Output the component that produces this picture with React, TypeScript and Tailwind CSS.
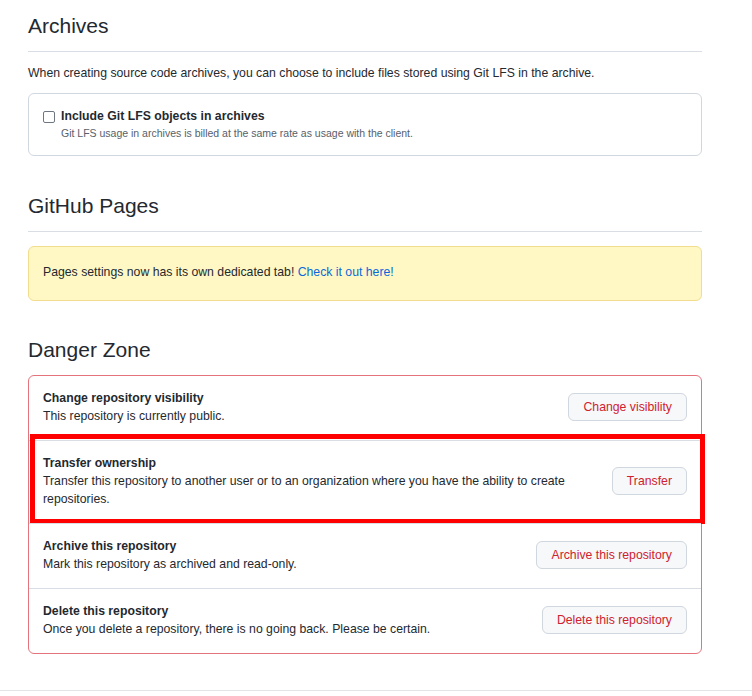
const font = { fontFamily: '"Liberation Sans", Arial, sans-serif' };

type DangerRow = {
  title: string;
  desc: string;
  action: string;
  marked?: boolean;
};

const rows: DangerRow[] = [
  { title: "Change repository visibility", desc: "This repository is currently public.", action: "Change visibility" },
  {
    title: "Transfer ownership",
    desc: "Transfer this repository to another user or to an organization where you have the ability to create repositories.",
    action: "Transfer",
    marked: true,
  },
  { title: "Archive this repository", desc: "Mark this repository as archived and read-only.", action: "Archive this repository" },
  { title: "Delete this repository", desc: "Once you delete a repository, there is no going back. Please be certain.", action: "Delete this repository" },
];

const Heading = ({ children, divider = true }: { children: string; divider?: boolean }) => (
  <div className={divider ? "border-b border-[#d8dee4] pb-[10px] pt-[10px]" : "pt-[10px] pb-[10px]"}>
    <h2 className="text-[21px] leading-[30px] font-normal text-[#24292f]">{children}</h2>
  </div>
);

const App = () => {
  return (
    <div style={font} className="min-h-[696px] w-[752px] bg-white text-[#24292f] flex flex-col">
      <div className="ml-[28px] mt-px w-[674px]">
        <Heading>Archives</Heading>
        <p className="mt-[12px] text-[12.25px] leading-[18px]">
          When creating source code archives, you can choose to include files stored using Git LFS in the archive.
        </p>
        <div className="mt-[11px] rounded-[6px] border border-[#d0d7de] px-[14px] py-[14px]">
          <label className="flex items-center gap-[6px]">
            <span className="inline-block h-[12px] w-[12px] rounded-[2px] border border-[#6e7781] bg-white" />
            <span className="text-[12.25px] leading-[17px] font-bold">Include Git LFS objects in archives</span>
          </label>
          <p className="ml-[18px] text-[10.5px] leading-[16px] text-[#57606a]">
            Git LFS usage in archives is billed at the same rate as usage with the client.
          </p>
        </div>

        <div className="mt-[25px]">
          <Heading>GitHub Pages</Heading>
        </div>
        <div className="mt-[14px] rounded-[6px] border border-[#f2dc8e] bg-[#fff8c5] px-[14px] pt-[15px] pb-[18px] text-[12.25px] leading-[20px]">
          Pages settings now has its own dedicated tab! <a className="text-[#0969da]">Check it out here!</a>
        </div>

        <div className="mt-[24px]">
          <Heading divider={false}>Danger Zone</Heading>
        </div>
        <div className="rounded-[6px] border border-[#e5737b]">
          {rows.map((row, i) => (
            <div
              key={row.title}
              className={`relative flex items-center justify-between gap-[16px] px-[14px] pt-[13px] pb-[15px] ${i > 0 ? "border-t border-[#d8dee4]" : ""}`}
            >
              <div className="text-[12.25px] leading-[18px]">
                <div className="font-bold">{row.title}</div>
                <div>{row.desc}</div>
              </div>
              <button className="shrink-0 h-[28px] rounded-[6px] border border-[#d0d7de] bg-[#f6f8fa] px-[14px] text-[12.25px] text-[#cf222e]">
                {row.action}
              </button>
              {row.marked && (
                <div className="pointer-events-none absolute left-[1px] right-[-4px] top-[-7px] bottom-[-1px] border-[5px] border-[#ff0000]" />
              )}
            </div>
          ))}
        </div>
      </div>
      <div className="mt-auto mb-[5px] h-px w-full bg-[#e1e4e8]" />
    </div>
  );
};

export default App;
